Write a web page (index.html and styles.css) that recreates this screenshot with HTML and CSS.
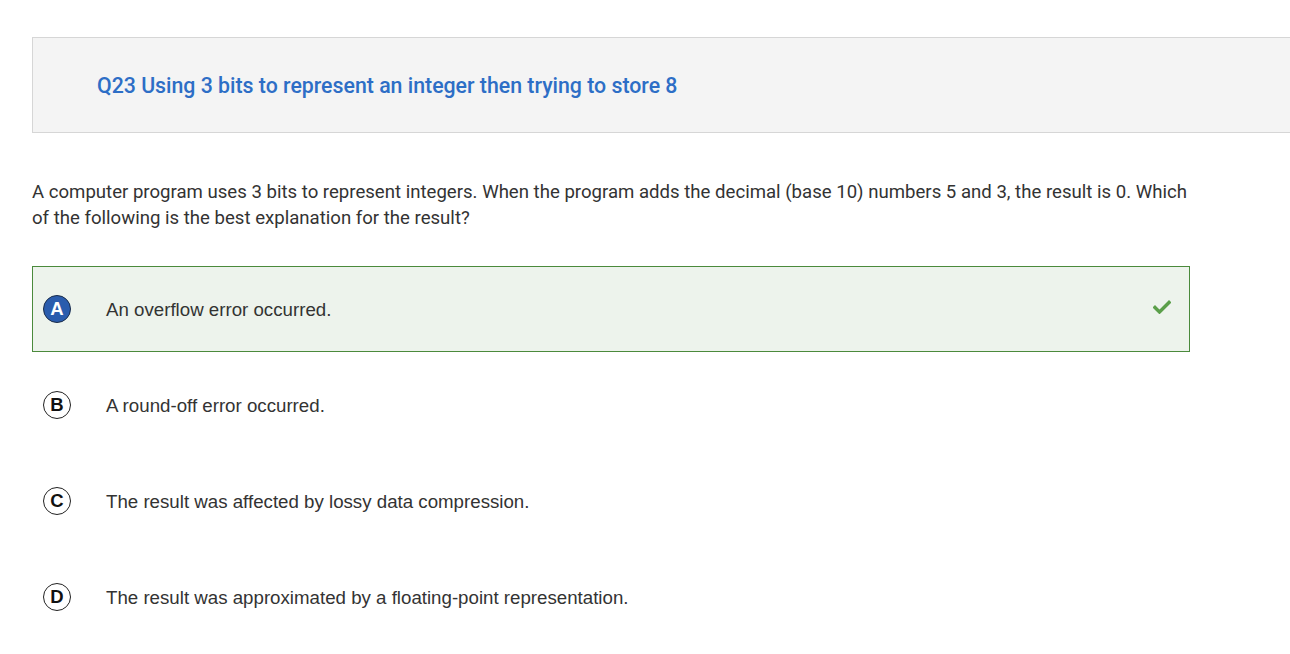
FILE: index.html
```html
<!DOCTYPE html>
<html>
<head>
<meta charset="utf-8">
<link rel="stylesheet" href="styles.css">
</head>
<body>
<div class="page">
  <div class="header">
    <h1 class="title">Q23 Using 3 bits to represent an integer then trying to store 8</h1>
  </div>
  <p class="question">A computer program uses 3 bits to represent integers. When the program adds the decimal (base 10) numbers 5 and 3, the result is 0. Which of the following is the best explanation for the result?</p>
  <div class="options">
    <div class="option correct">
      <span class="letter selected">A</span>
      <span class="text">An overflow error occurred.</span>
      <svg class="check" width="18" height="14" viewBox="0 0 18 14"><path d="M2 7.5 L6.5 12 L16 2.5" fill="none" stroke="#5b9f4a" stroke-width="3.4" stroke-linecap="square"/></svg>
    </div>
    <div class="option">
      <span class="letter">B</span>
      <span class="text">A round-off error occurred.</span>
    </div>
    <div class="option">
      <span class="letter">C</span>
      <span class="text">The result was affected by lossy data compression.</span>
    </div>
    <div class="option">
      <span class="letter">D</span>
      <span class="text">The result was approximated by a floating-point representation.</span>
    </div>
  </div>
</div>
</body>
</html>
```
FILE: styles.css
```css
html, body {
  margin: 0;
  padding: 0;
  background: #ffffff;
  overflow: hidden;
}
.page {
  padding: 37px 0 0 32px;
}
.header {
  height: 94px;
  margin-right: -40px;
  background: #f4f4f4;
  border: 1px solid #d6d6d6;
  display: flex;
  align-items: center;
  padding-left: 64px;
}
.title {
  margin: 0;
  font-family: Roboto, sans-serif;
  font-weight: 500;
  font-size: 21.3px;
  color: #2d6ec6;
}
.question {
  margin: 46px 0 0 0;
  width: 1162px;
  font-family: Roboto, sans-serif;
  font-size: 18.6px;
  line-height: 26px;
  color: #333333;
}
.options {
  margin-top: 35px;
  width: 1158px;
  display: flex;
  flex-direction: column;
  gap: 10px;
}
.option {
  height: 84px;
  box-sizing: content-box;
  border: 1px solid transparent;
  display: flex;
  align-items: center;
  padding-left: 10px;
  padding-right: 18px;
  font-family: "Liberation Sans", Arial, sans-serif;
  font-size: 18.7px;
  color: #333333;
}
.option .text {
  padding-top: 2px;
}
.option.correct {
  background: #edf3ec;
  border-color: #4b8a3c;
}
.letter {
  width: 26px;
  height: 26px;
  border-radius: 50%;
  border: 1px solid #222;
  display: flex;
  align-items: center;
  justify-content: center;
  font-family: "Liberation Sans", Arial, sans-serif;
  font-weight: bold;
  font-size: 18.5px;
  color: #111;
  margin-right: 35px;
  flex: none;
}
.letter.selected {
  background: #2a5cad;
  border-color: #1a2c4a;
  color: #ffffff;
}
.text {
  flex: 1;
}
.check {
  flex: none;
  margin-top: -4px;
}
```
